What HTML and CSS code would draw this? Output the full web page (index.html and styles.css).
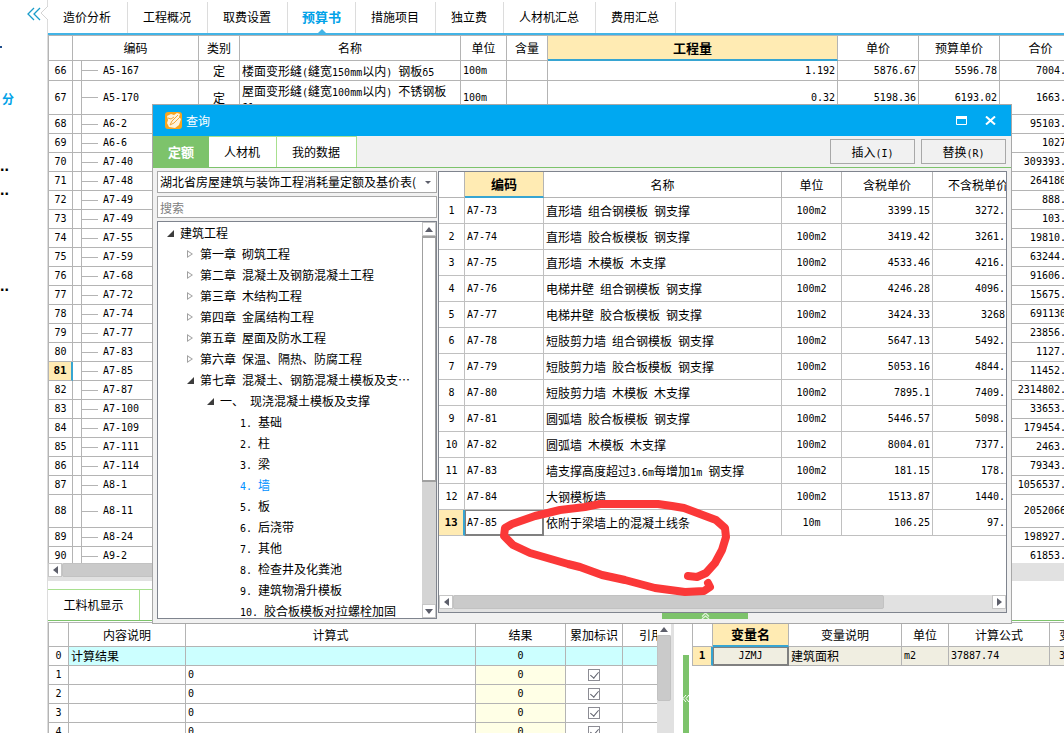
FILE: index.html
```html
<!DOCTYPE html>
<html lang="zh-CN">
<head>
<meta charset="utf-8">
<title>预算书</title>
<link rel="stylesheet" href="styles.css">
</head>
<body>
<div class="app">
  <aside class="rail">
    <button class="collapse" aria-label="收起"><svg width="14" height="14" viewBox="0 0 14 14"><path d="M7 1L1 7l6 6M13 1L7 7l6 6" fill="none" stroke="#1a9cc9" stroke-width="1.3"/></svg></button>
    <svg class="notch" width="8" height="14" viewBox="0 0 8 14"><path d="M8 0L1 7l7 7" fill="#fff" stroke="#d4d4d4"/></svg>
    <span class="dash"></span>
    <span class="part">分</span>
    <span class="dots first">..</span>
    <span class="dots second">..</span>
    <span class="dots third">..</span>
  </aside>
  <main class="main">
    <nav class="nav">
      <a href="#">造价分析</a><a href="#">工程概况</a><a href="#">取费设置</a><a href="#" class="on">预算书</a><a href="#">措施项目</a><a href="#">独立费</a><a href="#">人材机汇总</a><a href="#">费用汇总</a>
    </nav>
    <section class="sheet">
      <table class="grid budget">
        <colgroup><col class="w24"><col class="w9"><col class="w117"><col class="w41"><col class="w221"><col class="w46"><col class="w41"><col><col class="w81"><col class="w81"><col class="w82"></colgroup>
        <thead><tr><th></th><th colspan="2">编码</th><th>类别</th><th>名称</th><th>单位</th><th>含量</th><th class="hot">工程量</th><th>单价</th><th>预算单价</th><th>合价</th></tr></thead>
        <tbody>
        <tr class="h20"><td class="no">66</td><td></td><td class="code">A5-167</td><td class="mid">定</td><td>楼面变形缝<span class="m">(</span>缝宽<span class="m">150mm</span>以内<span class="m">) </span>钢板<span class="m">δ5</span></td><td class="n">100m</td><td></td><td class="num">1.192</td><td class="num">5876.67</td><td class="num">5596.78</td><td class="num cut">7004.</td></tr>
        <tr class="h34"><td class="no">67</td><td></td><td class="code">A5-170</td><td class="mid">定</td><td class="two">屋面变形缝<span class="m">(</span>缝宽<span class="m">100mm</span>以内<span class="m">) </span>不锈钢板<br><span class="m">δ1</span></td><td class="n">100m</td><td></td><td class="num">0.32</td><td class="num">5198.36</td><td class="num">6193.02</td><td class="num cut">1663.</td></tr>
        <tr><td class="no">68</td><td></td><td class="code">A6-2</td><td></td><td></td><td></td><td></td><td></td><td></td><td></td><td class="num cut">95103.</td></tr>
        <tr><td class="no">69</td><td></td><td class="code">A6-6</td><td></td><td></td><td></td><td></td><td></td><td></td><td></td><td class="num cut">1027</td></tr>
        <tr><td class="no">70</td><td></td><td class="code">A7-40</td><td></td><td></td><td></td><td></td><td></td><td></td><td></td><td class="num cut">309393.</td></tr>
        <tr><td class="no">71</td><td></td><td class="code">A7-48</td><td></td><td></td><td></td><td></td><td></td><td></td><td></td><td class="num cut">264180</td></tr>
        <tr><td class="no">72</td><td></td><td class="code">A7-49</td><td></td><td></td><td></td><td></td><td></td><td></td><td></td><td class="num cut">888.</td></tr>
        <tr><td class="no">73</td><td></td><td class="code">A7-49</td><td></td><td></td><td></td><td></td><td></td><td></td><td></td><td class="num cut">103.</td></tr>
        <tr><td class="no">74</td><td></td><td class="code">A7-55</td><td></td><td></td><td></td><td></td><td></td><td></td><td></td><td class="num cut">19810.</td></tr>
        <tr><td class="no">75</td><td></td><td class="code">A7-59</td><td></td><td></td><td></td><td></td><td></td><td></td><td></td><td class="num cut">63244.</td></tr>
        <tr><td class="no">76</td><td></td><td class="code">A7-68</td><td></td><td></td><td></td><td></td><td></td><td></td><td></td><td class="num cut">91606.</td></tr>
        <tr><td class="no">77</td><td></td><td class="code">A7-72</td><td></td><td></td><td></td><td></td><td></td><td></td><td></td><td class="num cut">15675.</td></tr>
        <tr><td class="no">78</td><td></td><td class="code">A7-74</td><td></td><td></td><td></td><td></td><td></td><td></td><td></td><td class="num cut">691130</td></tr>
        <tr><td class="no">79</td><td></td><td class="code">A7-77</td><td></td><td></td><td></td><td></td><td></td><td></td><td></td><td class="num cut">23856.</td></tr>
        <tr><td class="no">80</td><td></td><td class="code">A7-83</td><td></td><td></td><td></td><td></td><td></td><td></td><td></td><td class="num cut">1127.</td></tr>
        <tr><td class="no cur">81</td><td></td><td class="code">A7-85</td><td></td><td></td><td></td><td></td><td></td><td></td><td></td><td class="num cut">11452.</td></tr>
        <tr><td class="no">82</td><td></td><td class="code">A7-87</td><td></td><td></td><td></td><td></td><td></td><td></td><td></td><td class="num cut">2314802.</td></tr>
        <tr><td class="no">83</td><td></td><td class="code">A7-100</td><td></td><td></td><td></td><td></td><td></td><td></td><td></td><td class="num cut">33653.</td></tr>
        <tr><td class="no">84</td><td></td><td class="code">A7-109</td><td></td><td></td><td></td><td></td><td></td><td></td><td></td><td class="num cut">179454.</td></tr>
        <tr><td class="no">85</td><td></td><td class="code">A7-111</td><td></td><td></td><td></td><td></td><td></td><td></td><td></td><td class="num cut">2463.</td></tr>
        <tr><td class="no">86</td><td></td><td class="code">A7-114</td><td></td><td></td><td></td><td></td><td></td><td></td><td></td><td class="num cut">79343.</td></tr>
        <tr><td class="no">87</td><td></td><td class="code">A8-1</td><td></td><td></td><td></td><td></td><td></td><td></td><td></td><td class="num cut">1056537.</td></tr>
        <tr class="h33"><td class="no">88</td><td></td><td class="code">A8-11</td><td></td><td></td><td></td><td></td><td></td><td></td><td></td><td class="num cut">2052066</td></tr>
        <tr><td class="no">89</td><td></td><td class="code">A8-24</td><td></td><td></td><td></td><td></td><td></td><td></td><td></td><td class="num cut">198927.</td></tr>
        <tr><td class="no">90</td><td></td><td class="code">A9-2</td><td></td><td></td><td></td><td></td><td></td><td></td><td></td><td class="num cut">61853.</td></tr>
        </tbody>
      </table>
    </section>
    <section class="lower">
      <div class="hbar"><button class="sb" aria-label="向左"><svg width="5" height="8" viewBox="0 0 5 8"><path d="M5 0v8L0 4z" fill="#5d5f6b"/></svg></button><div class="hthumb"></div></div>
      <div class="subtabs"><button class="subtab">工料机显示</button></div>
      <div class="panes">
        <div class="pane calc">
          <div class="clip">
            <table class="grid detail wide">
              <colgroup><col class="w20"><col class="w117"><col><col class="w90"><col class="w57"><col class="w57"></colgroup>
              <thead><tr><th></th><th>内容说明</th><th>计算式</th><th>结果</th><th>累加标识</th><th>引用</th></tr></thead>
              <tbody>
              <tr class="sum"><td class="no">0</td><td>计算结果</td><td></td><td class="no">0</td><td></td><td></td></tr>
              <tr><td class="no">1</td><td></td><td class="n">0</td><td class="no res">0</td><td class="mid"><input type="checkbox" checked aria-label="累加标识"></td><td></td></tr>
              <tr><td class="no">2</td><td></td><td class="n">0</td><td class="no res">0</td><td class="mid"><input type="checkbox" checked aria-label="累加标识"></td><td></td></tr>
              <tr><td class="no">3</td><td></td><td class="n">0</td><td class="no res">0</td><td class="mid"><input type="checkbox" checked aria-label="累加标识"></td><td></td></tr>
              <tr><td class="no">4</td><td></td><td class="n">0</td><td class="no res">0</td><td class="mid"><input type="checkbox" checked aria-label="累加标识"></td><td></td></tr>
              </tbody>
            </table>
          </div>
          <div class="vbar"><button class="sb up" aria-label="向上"><svg width="8" height="5" viewBox="0 0 8 5"><path d="M0 5h8L4 0z" fill="#5d5f6b"/></svg></button><div class="vthumb"></div></div>
        </div>
        <div class="split"><div class="grip"><svg width="6" height="9" viewBox="0 0 6 9"><path d="M3 1L0 4.500l3 3.500M6 1L3 4.500l3 3.500" fill="none" stroke="#fff"/></svg></div></div>
        <div class="pane vars">
          <table class="grid detail">
            <colgroup><col class="w20"><col class="w76"><col class="w113"><col class="w47"><col class="w101"><col></colgroup>
            <thead><tr><th></th><th class="hot">变量名</th><th>变量说明</th><th>单位</th><th>计算公式</th><th class="edge">变</th></tr></thead>
            <tbody><tr class="beige"><td class="no cur">1</td><td class="no sel">JZMJ</td><td>建筑面积</td><td class="n">m2</td><td class="n">37887.74</td><td class="n edge">3</td></tr></tbody>
          </table>
        </div>
      </div>
    </section>
  </main>

  <section class="dialog" role="dialog" aria-label="查询">
    <header class="title">
      <svg width="17" height="17" viewBox="0 0 17 17"><rect x="0" y="0" width="17" height="17" rx="3" fill="#f9a51b"/><path d="M2 4l4-2 3 1 3-2 3 1-1 3 2 2-2 6-4 3-6-1-2-4 1-3z" fill="#fff3dc"/><path d="M13 3L7 9l-2 4 4-2 6-6M3 6l3 1 3-2" fill="none" stroke="#f4a637" stroke-width="1"/></svg>
      <span>查询</span>
      <button aria-label="最大化"><svg width="11" height="9" viewBox="0 0 11 9"><path d="M.5 1v7.500h10V1" fill="none" stroke="#fff"/><path d="M0 0h11v3H0z" fill="#fff"/></svg></button>
      <button class="close" aria-label="关闭"><svg width="11" height="9" viewBox="0 0 11 9"><path d="M1 .5l9 8M10 .5l-9 8" fill="none" stroke="#fff" stroke-width="2"/></svg></button>
    </header>
    <div class="bar">
      <button class="tab on">定额</button><button class="tab">人材机</button><button class="tab">我的数据</button>
      <div class="actions"><button class="act">插入<span class="m">(I)</span></button><button class="act">替换<span class="m">(R)</span></button></div>
    </div>
    <div class="body">
      <div class="left">
        <div class="combo"><select aria-label="定额库"><option>湖北省房屋建筑与装饰工程消耗量定额及基价表(</option></select><svg width="6" height="3" viewBox="0 0 6 3"><path d="M0 0h6L3 3z" fill="#5d5f6b"/></svg></div>
        <input class="search" type="text" placeholder="搜索" aria-label="搜索">
        <div class="tree">
          <ul>
            <li class="l0 open">建筑工程</li>
            <li class="l1 shut">第一章<span class="m"> </span>砌筑工程</li>
            <li class="l1 shut">第二章<span class="m"> </span>混凝土及钢筋混凝土工程</li>
            <li class="l1 shut">第三章<span class="m"> </span>木结构工程</li>
            <li class="l1 shut">第四章<span class="m"> </span>金属结构工程</li>
            <li class="l1 shut">第五章<span class="m"> </span>屋面及防水工程</li>
            <li class="l1 shut">第六章<span class="m"> </span>保温、隔热、防腐工程</li>
            <li class="l1 open">第七章<span class="m"> </span>混凝土、钢筋混凝土模板及支…</li>
            <li class="l2 open">一、<span class="m"> </span>现浇混凝土模板及支撑</li>
            <li class="l3"><span class="m">1. </span>基础</li>
            <li class="l3"><span class="m">2. </span>柱</li>
            <li class="l3"><span class="m">3. </span>梁</li>
            <li class="l3 here"><span class="m">4. </span>墙</li>
            <li class="l3"><span class="m">5. </span>板</li>
            <li class="l3"><span class="m">6. </span>后浇带</li>
            <li class="l3"><span class="m">7. </span>其他</li>
            <li class="l3"><span class="m">8. </span>检查井及化粪池</li>
            <li class="l3"><span class="m">9. </span>建筑物滑升模板</li>
            <li class="l3"><span class="m">10. </span>胶合板模板对拉螺栓加固</li>
          </ul>
          <div class="tbar"><button class="sb" aria-label="向上"><svg width="8" height="5" viewBox="0 0 8 5"><path d="M0 5h8L4 0z" fill="#5d5f6b"/></svg></button><div class="tthumb"></div><button class="sb down" aria-label="向下"><svg width="8" height="5" viewBox="0 0 8 5"><path d="M0 0h8L4 5z" fill="#5d5f6b"/></svg></button></div>
        </div>
      </div>
      <div class="right">
        <table class="grid quota">
          <colgroup><col class="w26"><col class="w79"><col><col class="w60"><col class="w91"><col class="w91"></colgroup>
          <thead><tr><th></th><th class="hot">编码</th><th>名称</th><th>单位</th><th>含税单价</th><th>不含税单价</th></tr></thead>
          <tbody>
          <tr><td class="no">1</td><td class="n">A7-73</td><td>直形墙<span class="m"> </span>组合钢模板<span class="m"> </span>钢支撑</td><td class="no">100m2</td><td class="num">3399.15</td><td class="num cut">3272.</td></tr>
          <tr><td class="no">2</td><td class="n">A7-74</td><td>直形墙<span class="m"> </span>胶合板模板<span class="m"> </span>钢支撑</td><td class="no">100m2</td><td class="num">3419.42</td><td class="num cut">3261.</td></tr>
          <tr><td class="no">3</td><td class="n">A7-75</td><td>直形墙<span class="m"> </span>木模板<span class="m"> </span>木支撑</td><td class="no">100m2</td><td class="num">4533.46</td><td class="num cut">4216.</td></tr>
          <tr><td class="no">4</td><td class="n">A7-76</td><td>电梯井壁<span class="m"> </span>组合钢模板<span class="m"> </span>钢支撑</td><td class="no">100m2</td><td class="num">4246.28</td><td class="num cut">4096.</td></tr>
          <tr><td class="no">5</td><td class="n">A7-77</td><td>电梯井壁<span class="m"> </span>胶合板模板<span class="m"> </span>钢支撑</td><td class="no">100m2</td><td class="num">3424.33</td><td class="num cut">3268</td></tr>
          <tr><td class="no">6</td><td class="n">A7-78</td><td>短肢剪力墙<span class="m"> </span>组合钢模板<span class="m"> </span>钢支撑</td><td class="no">100m2</td><td class="num">5647.13</td><td class="num cut">5492.</td></tr>
          <tr><td class="no">7</td><td class="n">A7-79</td><td>短肢剪力墙<span class="m"> </span>胶合板模板<span class="m"> </span>钢支撑</td><td class="no">100m2</td><td class="num">5053.16</td><td class="num cut">4844.</td></tr>
          <tr><td class="no">8</td><td class="n">A7-80</td><td>短肢剪力墙<span class="m"> </span>木模板<span class="m"> </span>木支撑</td><td class="no">100m2</td><td class="num">7895.1</td><td class="num cut">7409.</td></tr>
          <tr><td class="no">9</td><td class="n">A7-81</td><td>圆弧墙<span class="m"> </span>胶合板模板<span class="m"> </span>钢支撑</td><td class="no">100m2</td><td class="num">5446.57</td><td class="num cut">5098.</td></tr>
          <tr><td class="no">10</td><td class="n">A7-82</td><td>圆弧墙<span class="m"> </span>木模板<span class="m"> </span>木支撑</td><td class="no">100m2</td><td class="num">8004.01</td><td class="num cut">7377.</td></tr>
          <tr><td class="no">11</td><td class="n">A7-83</td><td>墙支撑高度超过<span class="m">3.6m</span>每增加<span class="m">1m </span>钢支撑</td><td class="no">100m2</td><td class="num">181.15</td><td class="num cut">178.</td></tr>
          <tr><td class="no">12</td><td class="n">A7-84</td><td>大钢模板墙</td><td class="no">100m2</td><td class="num">1513.87</td><td class="num cut">1440.</td></tr>
          <tr><td class="no cur">13</td><td class="n sel">A7-85</td><td>依附于梁墙上的混凝土线条</td><td class="no">10m</td><td class="num">106.25</td><td class="num cut">97.</td></tr>
          </tbody>
        </table>
        <div class="hbar"><button class="sb" aria-label="向左"><svg width="5" height="8" viewBox="0 0 5 8"><path d="M5 0v8L0 4z" fill="#5d5f6b"/></svg></button><div class="hthumb"></div><button class="sb end" aria-label="向右"><svg width="5" height="8" viewBox="0 0 5 8"><path d="M0 0v8l5-4z" fill="#5d5f6b"/></svg></button></div>
      </div>
    </div>
    <div class="handle"><svg width="9" height="6" viewBox="0 0 9 6"><path d="M1 3.500L4.500 0 8 3.500M1 6L4.500 3 8 6" fill="none" stroke="#dff3d8" stroke-width="1.200"/></svg></div>
    <svg class="scribble" width="240" height="104" viewBox="495 496 240 104"><path d="M688 576 L697 577 L706 573 L715 563 L722 550 L726 537 L725 528 L716 520 L700 514 L684 508 L672 506 L658 504 L600 504 L585 507 L560 510 L535 516 L512 524 L505 528 L504 536 L513 545 L530 553 L568 564 L580 567 L602 575 L625 580 L655 588 L685 592 L704 591 L710 587 L708 583" fill="none" stroke="#fb3838" stroke-width="8" stroke-linecap="round" stroke-linejoin="round"/></svg>
  </section>
</div>
</body>
</html>
```
FILE: styles.css
```css
* { box-sizing: border-box; }
body, button, input, select, table {
  font: 12px/16px "Noto Sans CJK SC", sans-serif;
  color: #000;
}
body { margin: 0; background: #fff; }
button { padding: 0; border: 0; background: none; }
ul { list-style: none; margin: 0; padding: 0; }
svg { display: block; flex: none; }

.app { position: relative; display: flex; height: 100vh; min-height: 640px; overflow: hidden; }

/* Left rail */
.rail { position: relative; flex: 0 0 48px; border-right: 1px solid #dcdcdc; }
.collapse { position: absolute; left: 27px; top: 7px; }
.notch { position: absolute; left: 40px; top: 6px; }
.dash { position: absolute; left: 0; top: 46px; width: 2px; height: 2px; background: #1f4e8c; }
.part { position: absolute; left: 2px; top: 91px; color: #00a2e8; font-weight: bold; }
.dots { position: absolute; left: 0; font: bold 16px/16px "Liberation Sans", sans-serif; }
.first { top: 158px; }
.second { top: 182px; }
.third { top: 278px; }

.main { display: flex; flex-direction: column; flex: 1; min-width: 0; }

/* Page tabs */
.nav { display: flex; flex: 0 0 35px; padding-top: 2px; border-bottom: 2px solid #42b4e6; }
.nav a { position: relative; padding: 0 16px 0 15px; border-right: 1px solid #dcdcdc; color: #000; line-height: 30px; text-decoration: none; white-space: nowrap; }
.nav a.on { padding: 0 14px; color: #00a2e8; font-size: 13px; font-weight: bold; }
.nav a.on::after { content: ""; position: absolute; left: 50%; bottom: 0; margin-left: -4px; border: 4px solid transparent; border-top: 0; border-bottom-color: #42b4e6; }

/* Grids */
.grid { table-layout: fixed; border-collapse: separate; border-spacing: 0; border: 0 solid #b4b4b4; }
.grid th, .grid td { height: 19px; padding: 0 2px; border: 0 solid #b4b4b4; border-width: 0 1px 1px 0; overflow: hidden; text-align: left; white-space: nowrap; }
.grid th { padding: 0; font-weight: normal; text-align: center; }
.grid th.hot { background: #ffebb3; border-bottom: 2px solid #37a5d2; font-size: 13px; font-weight: bold; }
.m, .grid .n, .grid .no, .grid .num, .grid .code { font-family: "DejaVu Sans Mono", monospace; font-size: 10px; white-space: pre; }
.m { line-height: 1px; }
.grid .no, .grid .mid { padding: 0; text-align: center; }
.grid .num { text-align: right; }
.grid .no.cur { background: #ffebb3; border-right: 2px solid #37a5d2; font-size: 11px; font-weight: bold; }

.sheet { flex: 1; min-height: 0; overflow: hidden; }
.budget { width: calc(100% + 18px); border-width: 1px 0 0 1px; }
.budget th { height: 25px; }
.budget .h20 td { height: 20px; }
.budget .h34 td { height: 34px; }
.budget .h33 td { height: 33px; }
.budget .num.cut { padding-right: 15px; }
.budget .two { line-height: 15px; vertical-align: top; padding-top: 2px; }
.budget .code { padding: 0; }
.code::before { content: ""; display: inline-block; width: 16px; height: 1px; margin-right: 5px; background: #b4b4b4; vertical-align: middle; }

.w9 { width: 9px; } .w20 { width: 20px; } .w24 { width: 24px; } .w26 { width: 26px; }
.w41 { width: 41px; } .w46 { width: 46px; } .w47 { width: 47px; } .w57 { width: 57px; }
.w60 { width: 60px; } .w76 { width: 76px; } .w79 { width: 79px; } .w81 { width: 81px; }
.w82 { width: 82px; } .w90 { width: 90px; } .w91 { width: 91px; } .w101 { width: 101px; }
.w113 { width: 113px; } .w117 { width: 117px; } .w221 { width: 221px; }

/* Scroll bars */
.sb { display: flex; align-items: center; justify-content: center; flex: none; width: 14px; height: 14px; border: 1px solid #c6c6c6; background: #fff; }
.hbar { display: flex; background: #e1e1e1; }
.hthumb { height: 14px; background: #cacaca; border: 1px solid #c2c2c2; border-radius: 2px; }

/* Lower part */
.lower { display: flex; flex-direction: column; flex: 0 0 170px; overflow: hidden; }
.lower .hbar { flex: 0 0 18px; }
.lower .hthumb { flex: 0 0 60%; }
.subtabs { display: flex; flex: 0 0 40px; padding-top: 8px; border-bottom: 1px solid #7dc36b; margin-bottom: 1px; }
.subtab { width: 92px; border: 1px solid #a8e08f; border-width: 1px 1px 0 0; }
.subtabs::after { content: ""; width: 40px; border-top: 1px solid #a8e08f; }
.panes { display: flex; flex: 1; min-height: 0; border-top: 1px solid #b4b4b4; }
.pane { display: flex; min-width: 0; }
.calc { flex: 1; }
.clip { flex: 1; min-width: 0; overflow: hidden; }
.detail { width: 100%; border-left-width: 1px; align-self: flex-start; }
.detail.wide { width: calc(100% + 23px); }
.detail th { height: 24px; }
.sum td { background: #ccffff; }
.grid .sum .no:first-child { background: #fff; }
.grid .res { background: #ffffe6; }
.calc input { appearance: none; display: block; width: 12px; height: 12px; margin: 0 auto 1px; border: 1px solid #8c8c94; position: relative; }
.calc input::after { content: ""; position: absolute; left: 3px; top: 0; width: 4px; height: 7px; border: solid #5d5f6b; border-width: 0 1px 1px 0; transform: rotate(40deg); }
.vbar { width: 17px; background: #e1e1e1; }
.vbar .up { height: 12px; border-width: 0; }
.vthumb { width: 14px; height: 66px; background: #cacaca; border: 1px solid #c2c2c2; border-radius: 2px; }
.split { flex: 0 0 18px; padding: 32px 3px 0 9px; }
.grip { display: flex; align-items: center; height: 86px; background: #7dc36b; }
.vars { flex: 0 0 372px; overflow: hidden; }
.beige td { background: #f0eee1; }
.grid .sel { box-shadow: inset 0 0 0 1px #808080; border-color: #808080; }
.grid .edge { padding: 0 0 0 9px; border-right: 0; text-align: left; }

/* Query dialog */
.dialog { position: absolute; left: 152px; right: 52px; top: 104px; border: 1px solid #a8a8a8; background: #f1f1f1; }
.title { display: flex; align-items: center; gap: 4px; height: 31px; padding: 0 15px 0 12px; background: #00a8f1; color: #fff; }
.title span { flex: 1; }
.title .close { margin-left: 14px; }
.bar { display: flex; height: 32px; border-bottom: 1px solid #7dc36b; }
.tab { padding: 0 16px 0 15px; border: 1px solid #a8e08f; border-width: 1px 1px 0 0; background: #fff; }
.tab.on { padding: 0 14px; border-color: #7dc36b; border-left-width: 1px; background: #7dc36b; color: #fff; font-size: 13px; font-weight: bold; }
.actions { display: flex; gap: 6px; margin-left: auto; padding: 3px 5px 3px; }
.act { width: 85px; border: 1px solid #a8a8a8; background: #f1f1f1; }
.body { display: flex; gap: 1px; padding: 3px 4px 4px; }
.left { display: flex; flex-direction: column; gap: 3px; flex: 0 0 280px; }
.combo { display: flex; align-items: center; height: 22px; padding-right: 5px; border: 1px solid #a8a8a8; background: #fff; }
.combo select { appearance: none; flex: 1; min-width: 0; padding: 0 0 0 2px; border: 0; background: none; overflow: hidden; }
.search { height: 22px; padding: 0 2px; border: 1px solid #a8a8a8; background: #fff; outline: 0; }
.search::placeholder { color: #808080; opacity: 1; }
.tree { display: flex; height: 398px; border: 1px solid #7f848e; background: #fff; overflow: hidden; }
.tree ul { flex: 1; min-width: 0; }
.tree li { height: 21px; line-height: 21px; white-space: nowrap; }
.l0 { padding-left: 22px; }
.l1 { padding-left: 42px; }
.l2 { padding-left: 62px; }
.l3 { padding-left: 82px; }
.here { color: #0090ff; }
.open::before, .shut::before { content: ""; display: inline-block; width: 7px; height: 7px; margin-left: -13px; margin-right: 6px; vertical-align: 1px; }
.open::before { background: #3c3c3c; clip-path: polygon(100% 0, 100% 100%, 0 100%); }
.shut::before { width: 6px; height: 8px; margin-right: 7px; background: #a0a0a0; clip-path: polygon(0 0, 100% 50%, 0 100%, 0 0, 17% 22%, 17% 78%, 74% 50%, 17% 22%); }
.tbar { display: flex; flex-direction: column; width: 14px; background: #d4d4d4; }
.tthumb { height: 246px; border: 1px solid #a0a0a0; border-width: 2px 1px; background: #fff; }
.tbar .down { margin-top: auto; }
.right { display: flex; flex-direction: column; flex: 1; min-width: 0; margin-bottom: 6px; border: 1px solid #7f848e; background: #fff; overflow: hidden; }
.quota { width: calc(100% + 18px); }
.quota th { height: 26px; }
.quota td { height: 26px; border-color: #c0c0c0; }
.quota .num.cut { padding-right: 18px; }
.right .hbar { margin-top: auto; padding-bottom: 3px; }
.right .hthumb { flex: 0 0 76%; }
.hbar .end { margin-left: auto; }
.handle { position: absolute; left: 509px; bottom: 4px; display: flex; justify-content: center; width: 86px; height: 6px; background: #7dc36b; }
.scribble { position: absolute; left: 342px; top: 391px; }
```
